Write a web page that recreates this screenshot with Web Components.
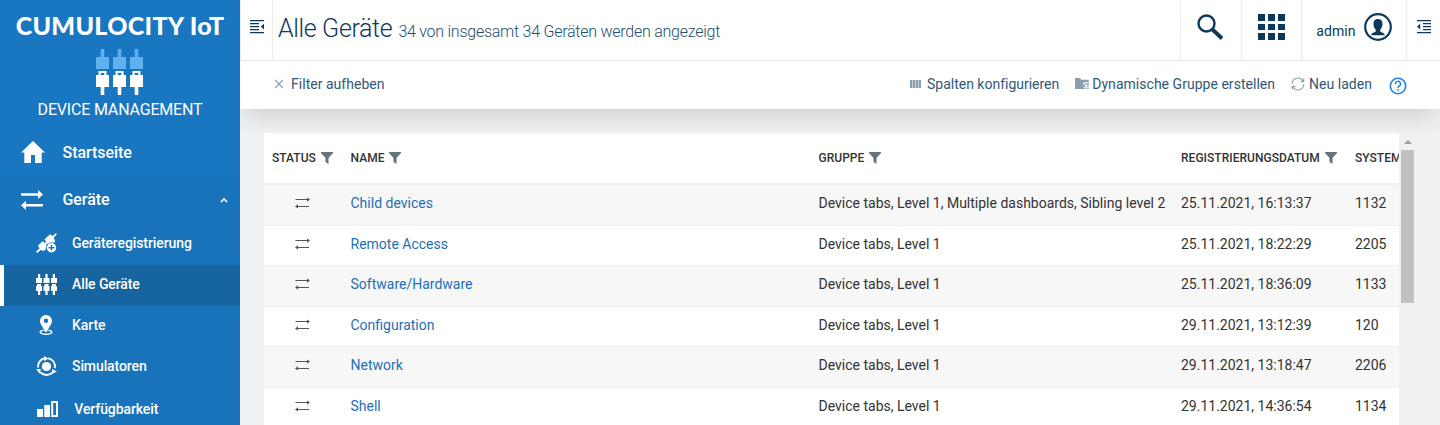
<!DOCTYPE html>
<html lang="de"><head><meta charset="utf-8"><title>Alle Geräte</title>
<style>
html,body{margin:0;height:425px;overflow:hidden;background:#f0f1f3;font-family:Roboto,sans-serif}
</style></head><body>
<device-app></device-app>
<script>
const ICONS={
home:['0 0 24 22','<path d="M12 0 24 11.5H20.7V22H14V14H10V22H3.3V11.5H0Z"/>'],
transfer:['0 0 22 20','<path d="M0 3.3H17V0L22 4.5 17 9V5.7H0ZM22 14H5V10.7L0 15.3 5 20V16.4H22Z"/>'],
swap:['0 0 15 12','<path d="M.5 2H12V.4L15 2.6 12 4.8V3.1H.5ZM14 8.9H3V7.2L0 9.4 3 11.6V10H14Z"/>'],
register:['0 0 21 20','<path d="M20 0 16.7 3 14 1.2 8.4 6.5 10.3 8.4 8.7 10 6.8 8 2 12.5 3.6 15.5 0 18.6 1.4 20 4.7 17 7.8 18 12 14 9.9 12 11.5 10.5 13.5 12.6 19 8.7 17.9 4.6 20.8 1.4Z"/><circle cx="15.5" cy="14.7" r="5.4" fill="#1873ba"/><circle cx="15.5" cy="14.7" r="4.7"/><path fill="#1873ba" d="M14.8 11.8h1.4v2.2h2.2v1.4h-2.2v2.2h-1.4v-2.2h-2.2v-1.4h2.2z"/>'],
plugs:['0 0 21 21','<path d="M2 0H4.2V4H6V9H0V4H2ZM9.4 0H11.6V4H13.5V9H7.5V4H9.4ZM16.8 0H19V4H21V9H15V4H16.8ZM1 10H5V12H6V17H4.2V21H2V17H0V12H1ZM8.5 10H12.5V12H13.5V17H11.6V21H9.4V17H7.5V12H8.5ZM16 10H20V12H21V17H19V21H16.8V17H15V12H16Z"/>'],
map:['0 0 14 20','<path fill-rule="evenodd" d="M7 0A6 6 0 0 1 13 6C13 9 10 12 7.8 17H6.2C4 12 1 9 1 6A6 6 0 0 1 7 0ZM7 3.6A2.2 2.2 0 1 0 7 8 2.2 2.2 0 0 0 7 3.6Z"/><path d="M4.6 15.2C-.5 16 .2 19.2 7 19.2S14.5 16 9.4 15.2" fill="none" stroke="#fff" stroke-width="1.5"/>'],
sim:['0 0 21 20','<circle cx="10.5" cy="10.5" r="4.6"/><g fill="none" stroke="#fff" stroke-width="1.9"><path d="M12.2 2.2A8.4 8.4 0 0 1 18.8 12.3"/><path d="M16.5 16.5A8.4 8.4 0 0 1 4.2 16.2"/><path d="M2.1 11.5A8.4 8.4 0 0 1 8.7 2.3"/></g><path d="M8.2 0 12.4 2.5 8.2 5.2ZM21 15.4 16.3 17.8 16 13ZM0 13.3 4.8 13 3.8 17.8Z"/>'],
bars:['0 0 21 16','<path fill-rule="evenodd" d="M0 8H6V16H0ZM7.2 4H13V16H7.2ZM14.2 0H21V16H14.2ZM16.2 2V14H19V2Z"/>'],
up:['0 0 8 6','<path d="M1 5 4 2 7 5" fill="none" stroke="#fff" stroke-width="1.6"/>'],
logo:['0 0 48 46','<g fill="#60b0ee"><path d="M4.7 0H8.3V8H13V20H0V8H4.7ZM21.7 0H25.3V8H30V20H17V8H21.7ZM38.7 0H42.3V8H47V20H34V8H38.7Z"/></g><path fill-rule="evenodd" d="M2.5 22H10.5V26H13V38H8.3V46H4.7V38H0V26H2.5ZM4.7 24V26H8.3V24ZM19.5 22H27.5V26H30V38H25.3V46H21.7V38H17V26H19.5ZM21.7 24V26H25.3V24ZM36.5 22H44.5V26H47V38H42.3V46H38.7V38H34V26H36.5ZM38.7 24V26H42.3V24Z"/>'],
outdent:['0 0 14 14','<path d="M0 0H14V1.3H0ZM0 3H9V4.2H0ZM0 6H9V7.2H0ZM0 9H9V10.2H0ZM0 12H14V13.3H0ZM14 3.8V9.4L10.8 6.6Z"/>'],
indent:['0 0 14 14','<path d="M0 0H14V1.3H0ZM6 3H14V4.2H6ZM6 6H14V7.2H6ZM6 9H14V10.2H6ZM0 12H14V13.3H0ZM0 6.6 3.2 3.7V9.5Z"/>'],
search:['0 0 27 27','<circle cx="9.5" cy="9.5" r="8" fill="none" stroke="currentColor" stroke-width="2.4"/><path d="M15.5 15.5 25 24.5" stroke="currentColor" stroke-width="3.8"/>'],
grid:['0 0 27 27','<path d="M0 0H7V7H0ZM10 0H17V7H10ZM20 0H27V7H20ZM0 10H7V16H0ZM10 10H17V16H10ZM20 10H27V16H20ZM0 19H7V26H0ZM10 19H17V26H10ZM20 19H27V26H20Z"/>'],
user:['0 0 28 28','<circle cx="14" cy="14" r="12.8" fill="none" stroke="currentColor" stroke-width="2.2"/><path d="M14 6C17.3 6 18.6 8.2 18.5 11 18.4 14 17.3 15.6 16.3 16.5V18.4C17.5 19.7 20.5 19.4 20.9 22.2H7.1C7.5 19.4 10.5 19.7 11.7 18.4V16.5C10.7 15.6 9.6 14 9.5 11 9.4 8.2 10.7 6 14 6Z"/>'],
close:['0 0 10 10','<path d="M1 1 9 9M9 1 1 9" fill="none" stroke="currentColor" stroke-width="1.1"/>'],
columns:['0 0 11 8','<path d="M0 0H2V8H0ZM3 0H5V8H3ZM6 0H8V8H6ZM9 0H11V8H9Z"/><path d="M0 0H11V8H0Z" opacity=".5"/>'],
folder:['0 0 15 12','<path d="M0 0H5L6.3 1.8H13.7V11H0Z"/><g fill="none" stroke="#fff" stroke-width="1.1"><path d="M8.3 6.7A2.7 2.7 0 0 1 13 5.5M13.5 7.8A2.7 2.7 0 0 1 8.8 9.2"/><circle cx="11" cy="7.5" r=".8"/></g>'],
reload:['0 0 14 14','<g fill="none" stroke="currentColor" stroke-width="1.1"><path d="M1.3 6.8A5.6 5.6 0 0 1 11.9 4.2M12.7 1.5V4.7H9.5M12.7 7.2A5.6 5.6 0 0 1 2.1 9.8M1.3 12.5V9.3H4.5"/></g>'],
help:['0 0 18 18','<circle cx="9" cy="9" r="7.7" fill="none" stroke="currentColor" stroke-width="1.6"/><path d="M6.5 7.1A2.5 2.5 0 1 1 9.8 9.2Q9 9.6 9 10.9" fill="none" stroke="currentColor" stroke-width="1.5"/><path d="M8.2 12.2H9.8V13.8H8.2Z"/>'],
filter:['0 0 12 12','<path d="M0 0H12V1L7.5 6V12L4.5 10V6L0 1Z"/>'],
tri:['0 0 8 4','<path d="M0 4 4 0 8 4Z"/>']
};
const define=(name,css,html)=>customElements.define(name,class extends HTMLElement{
  connectedCallback(){
    if(this.shadowRoot)return;
    const t=document.createElement('template');
    t.innerHTML='<style>*{box-sizing:border-box}'+css+'</style>'+(typeof html==='function'?html(this):html);
    this.attachShadow({mode:'open'}).append(t.content.cloneNode(true));
  }
});
define('ui-icon',':host{display:block;flex:none}svg{display:block;fill:currentColor}',e=>{
  const [v,p]=ICONS[e.getAttribute('name')],b=v.split(' ');
  return `<svg width="${b[2]}" height="${b[3]}" viewBox="${v}">${p}</svg>`;
});
define('nav-item',`:host{display:flex;align-items:center;height:41px;padding-left:36px;font:500 14px/20px Roboto,sans-serif;letter-spacing:-.1px;color:#fff;box-sizing:border-box}
:host([top]){height:47px;padding-left:21px;font-size:16px;letter-spacing:-.05px}
:host([active]){background:#1664a0;border-left:4px solid #fff;padding:0 0 3px 32px}
.i{width:36px;display:flex}.i ui-icon{margin-left:var(--shift,0)}:host([top]) .i{width:41.5px}:host([icon=home]) ui-icon{margin-bottom:2px}span{flex:1}.e{margin-right:12px}`,
e=>`<div class="i"><ui-icon name="${e.getAttribute('icon')}"></ui-icon></div><span><slot></slot></span>${e.hasAttribute('open')?'<ui-icon class="e" name="up"></ui-icon>':''}`);
define('side-nav',`:host{display:block;width:240px;height:425px;background:#1976c0;color:#fff;overflow:hidden}
header{height:130px;display:flex;flex-direction:column;align-items:center}
.brand{font:900 25px/30px Lato,sans-serif;letter-spacing:.3px;margin-top:10px;white-space:nowrap}
.logo{margin-top:9px}.app{font:400 16px/20px Roboto,sans-serif;letter-spacing:-.18px;margin-top:5px;white-space:nowrap}
.group{background:#1873ba;border-top:1px solid #176db0;height:260px}`,
`<header><div class="brand">CUMULOCITY IoT</div><ui-icon class="logo" name="logo"></ui-icon><div class="app">DEVICE MANAGEMENT</div></header>
<nav><nav-item top icon="home" style="height:45px">Startseite</nav-item><div style="height:2px"></div>
<div class="group"><nav-item top icon="transfer" open style="height:43px">Geräte</nav-item><nav-item icon="register" style="height:44px">Geräteregistrierung</nav-item>
<nav-item icon="plugs" active>Alle Geräte</nav-item><nav-item icon="map" style="height:38px;--shift:3px">Karte</nav-item>
<nav-item icon="sim" style="height:44px">Simulatoren</nav-item><nav-item icon="bars" style="padding-left:37px">&hairsp;Verfügbarkeit</nav-item></div></nav>`);
define('top-bar',`:host{display:flex;height:61px;background:#fff;border-bottom:1px solid #ececec;color:#0b385b;box-sizing:border-box}
.cell{display:flex;justify-content:center;border-left:1px solid #ececec}
.title{flex:1;border-left:1px solid #ececec;padding-left:5px;display:flex;align-items:baseline;white-space:nowrap}
h1{font:300 25px/30px Roboto,sans-serif;letter-spacing:-.35px;margin:14px 0 0}
small{font:300 16px/20px Roboto,sans-serif;letter-spacing:-.25px;color:#244e70;margin-left:6px}
.admin{font:400 14px/20px Roboto,sans-serif;letter-spacing:.1px;margin:21px 8px 0 0}`,
`<div class="cell" style="width:32px;padding-top:20px"><ui-icon name="outdent"></ui-icon></div>
<div class="title"><h1>Alle Geräte</h1><small>34 von insgesamt 34 Geräten werden angezeigt</small></div>
<div class="cell" style="width:61px;padding:14px 2px 0 0"><ui-icon name="search"></ui-icon></div>
<div class="cell" style="width:60px;padding-top:14px"><ui-icon name="grid"></ui-icon></div>
<div class="cell" style="width:105px;padding-top:0"><span class="admin">admin</span><ui-icon name="user" style="margin-top:13px"></ui-icon></div>
<div class="cell" style="width:34px;padding-top:20px"><ui-icon name="indent"></ui-icon></div>`);
define('bar-action',':host{display:flex;align-items:center;font:400 14px/20px Roboto,sans-serif;letter-spacing:.03px;color:#315877;white-space:nowrap;height:20px}ui-icon{color:#8b9fae;margin-right:var(--gap,6px)}',
e=>`<ui-icon name="${e.getAttribute('icon')}"></ui-icon><span><slot></slot></span>`);
define('action-bar',`:host{display:flex;align-items:flex-start;height:48px;background:#fff;padding:13px 0 0 34px;box-sizing:border-box;box-shadow:0 12px 24px -6px rgba(0,0,0,.16);position:relative}
.sp{flex:1}.help{color:#1d86df;margin:3px 33px 0 17px}`,
`<bar-action icon="close" style="--gap:7px">Filter aufheben</bar-action><div class="sp"></div>
<bar-action icon="columns" style="margin-right:16px;letter-spacing:-.01px">Spalten konfigurieren</bar-action>
<bar-action icon="folder" style="margin-right:16px;--gap:2px">Dynamische Gruppe erstellen</bar-action>
<bar-action icon="reload" style="--gap:4px">Neu laden</bar-action><ui-icon class="help" name="help"></ui-icon>`);
const rows=[['Child devices','Device tabs, Level 1, Multiple dashboards, Sibling level 2','25.11.2021, 16:13:37','1132'],['Remote Access','Device tabs, Level 1','25.11.2021, 18:22:29','2205'],['Software/Hardware','Device tabs, Level 1','25.11.2021, 18:36:09','1133'],['Configuration','Device tabs, Level 1','29.11.2021, 13:12:39','120'],['Network','Device tabs, Level 1','29.11.2021, 13:18:47','2206'],['Shell','Device tabs, Level 1','29.11.2021, 14:36:54','1134']];
define('device-row',`:host{display:grid;grid-template-columns:86.5px 468px 362.5px 174px 44px;align-items:center;box-sizing:border-box;height:var(--h,41px);padding-bottom:3px;border-bottom:1px solid #efefef;background:#fff;font:400 14px/20px Roboto,sans-serif;letter-spacing:0;color:#333;white-space:nowrap}
:host([odd]){background:#f7f7f7;padding-bottom:4px}ui-icon{color:#555;margin-left:31px}a{color:#1f6fb8}`,
e=>{const r=rows[e.getAttribute('n')];return `<ui-icon name="swap"></ui-icon><a>${r[0]}</a><span>${r[1]}</span><span>${r[2]}</span><span>${r[3]}</span>`});
define('head-cell',':host{display:flex;align-items:center;font:500 12px/20px Roboto,sans-serif;letter-spacing:.03px;color:#333}ui-icon{color:#64757f;margin-left:5px}',
e=>`<span><slot></slot></span>${e.hasAttribute('nofilter')?'':'<ui-icon name="filter"></ui-icon>'}`);
define('device-table',`:host{display:flex;height:292px;width:1152px;overflow:hidden}
.t{width:1135px;overflow:hidden;background:#fff}.head{display:grid;grid-template-columns:78.5px 468px 362.5px 174px 52px;padding-left:8px;height:52px;border-bottom:2px solid #efefef;align-items:center}
.scroll{width:17px;background:#f1f1f1;display:flex;flex-direction:column;align-items:center;color:#a2a2a2}.thumb{width:13px;height:153px;background:#c1c1c1;margin-top:6px}`,
`<div class="t"><div class="head"><head-cell>STATUS</head-cell><head-cell>NAME</head-cell><head-cell>GRUPPE</head-cell><head-cell>REGISTRIERUNGSDATUM</head-cell><head-cell nofilter>SYSTEM</head-cell></div>
${rows.map((r,i)=>`<device-row n="${i}" ${i%2?'':'odd'} style="--h:${i%2?40:41}px"></device-row>`).join('')}</div>
<div class="scroll"><ui-icon name="tri" style="margin-top:7px"></ui-icon><div class="thumb"></div></div>`);
define('device-app',`:host{display:grid;grid-template-columns:240px 1200px;height:425px}main{overflow:hidden}device-table{margin:24px 0 0 24px}`,
`<side-nav></side-nav><main><top-bar></top-bar><action-bar></action-bar><device-table></device-table></main>`);
</script></body></html>
